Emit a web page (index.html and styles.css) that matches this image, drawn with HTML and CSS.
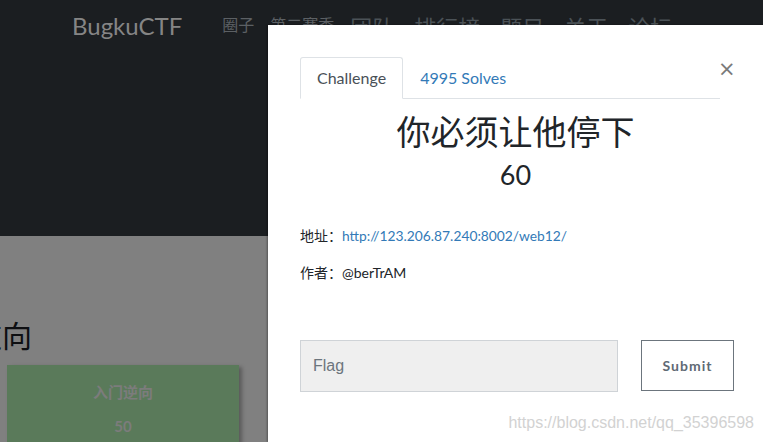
FILE: index.html
```html
<!DOCTYPE html>
<html lang="zh">
<head>
<meta charset="utf-8">
<title>BugkuCTF</title>
<link rel="stylesheet" href="styles.css">
</head>
<body>
<div class="page">
  <header class="hero">
    <nav class="topnav">
      <a class="brand">BugkuCTF</a>
      <ul class="menu">
        <li class="small">圈子</li>
        <li class="small">第二赛季</li>
        <li>团队</li>
        <li>排行榜</li>
        <li>题目</li>
        <li>关于</li>
        <li>论坛</li>
      </ul>
    </nav>
  </header>
  <main class="content">
    <h2 class="category">逆向</h2>
    <div class="card">
      <div class="card-name">入门逆向</div>
      <div class="card-value">50</div>
    </div>
  </main>
</div>

<div class="modal">
  <div class="modal-head">
    <ul class="tabs">
      <li class="tab active">Challenge</li>
      <li class="tab"><a class="tab-link">4995 Solves</a></li>
    </ul>
    <span class="close">&times;</span>
  </div>
  <h3 class="title">你必须让他停下</h3>
  <div class="score">60</div>
  <p class="meta">地址：<a class="link">http://123.206.87.240:8002/web12/</a></p>
  <p class="meta">作者：@berTrAM</p>
  <form class="flag-row">
    <input class="flag-input" type="text" placeholder="Flag">
    <button class="submit" type="button">Submit</button>
  </form>
</div>

<div class="watermark">https://blog.csdn.net/qq_35396598</div>
</body>
</html>
```

FILE: styles.css
```css
html, body {
  margin: 0;
  padding: 0;
}
body {
  width: 763px;
  height: 442px;
  overflow: hidden;
  background: #808080;
  font-family: Lato, "Noto Sans CJK SC", sans-serif;
  position: relative;
}
.page {
  width: 763px;
}
.hero {
  height: 236px;
  background: #1b1e21;
}
.topnav {
  display: flex;
  align-items: flex-start;
  padding-left: 72px;
}
.brand {
  font-family: Lato, sans-serif;
  font-size: 24px;
  line-height: 28px;
  margin-top: 12px;
  color: #858585;
}
.menu {
  list-style: none;
  display: flex;
  margin: 0 0 0 40px;
  padding: 0;
  gap: 20px;
}
.menu li {
  font-family: "Noto Sans CJK SC", sans-serif;
  font-size: 22px;
  line-height: 30px;
  margin-top: 11px;
  color: #4b5257;
}
.menu li.small {
  font-size: 16px;
  line-height: 20px;
  margin-top: 14px;
  color: #5c6064;
  margin-right: -4px;
}
.content {
  padding: 0;
}
.category {
  font-family: "Noto Sans CJK SC", sans-serif;
  font-weight: normal;
  font-size: 30px;
  line-height: 36px;
  margin: 80px 0 0 -28px;
  color: #0e0f12;
}
.card {
  margin: 13px 0 0 7px;
  width: 232px;
  height: 120px;
  background: #5a7a5a;
  box-shadow: 3px 2px 4px rgba(0, 0, 0, 0.3);
  text-align: center;
  color: #7c7c7c;
  font-family: "Noto Sans CJK SC", sans-serif;
  font-weight: 700;
  font-size: 15px;
}
.card-name {
  padding-top: 16px;
  line-height: 22px;
}
.card-value {
  margin-top: 12px;
  line-height: 22px;
  font-family: Lato, sans-serif;
  font-size: 15px;
}
.modal {
  position: absolute;
  left: 268px;
  top: 25px;
  width: 495px;
  height: 417px;
  background: #fff;
  box-shadow: -1px 0 2px rgba(0, 0, 0, 0.35);
  box-sizing: border-box;
  padding: 32px 0 0 32px;
}
.modal-head {
  display: flex;
  align-items: flex-start;
}
.tabs {
  list-style: none;
  margin: 0;
  padding: 0;
  width: 420px;
  display: flex;
  border-bottom: 1px solid #dee2e6;
}
.tab {
  font-size: 16px;
  line-height: 40px;
  padding: 0 16px;
  border: 1px solid transparent;
  border-radius: 3px 3px 0 0;
  margin-bottom: -1px;
  color: #495057;
}
.tab.active {
  border-color: #dee2e6 #dee2e6 #fff;
  background: #fff;
}
.tab-link {
  color: #337ab7;
}
.close {
  font-family: "DejaVu Sans", sans-serif;
  font-size: 21px;
  line-height: 24px;
  color: #7a7a7a;
  margin: 0 0 0 -2px;
  padding: 0;
  width: 14px;
}
.title {
  margin: 12px 32px 0 0;
  text-align: center;
  font-family: "Noto Sans CJK SC", sans-serif;
  font-weight: normal;
  font-size: 34px;
  line-height: 40px;
  color: #212529;
}
.score {
  margin: 7px 32px 0 0;
  text-align: center;
  font-size: 27px;
  line-height: 34px;
  color: #212529;
}
.meta {
  margin: 0 0 17px;
  font-size: 14px;
  line-height: 20px;
  color: #212529;
}
.score + .meta {
  margin-top: 34px;
}
.link {
  color: #337ab7;
  font-size: 13.8px;
}
.flag-row {
  display: flex;
  align-items: flex-start;
  gap: 23px;
  margin-top: 57px;
}
.flag-input {
  box-sizing: border-box;
  width: 318px;
  height: 52px;
  margin: 0;
  padding: 0 12px;
  background: #efefef;
  border: 1px solid #cfd3d7;
  font-family: "Liberation Sans", Arial, sans-serif;
  font-size: 16px;
  color: #495057;
  outline: none;
}
.flag-input::placeholder {
  color: #6c757d;
}
.submit {
  box-sizing: border-box;
  width: 93px;
  height: 51px;
  margin: 0;
  background: #fff;
  border: 1px solid #6c757d;
  font-family: Lato, sans-serif;
  font-weight: bold;
  font-size: 14px;
  letter-spacing: 1px;
  color: #5f6a75;
}
.watermark {
  position: absolute;
  right: 9px;
  top: 413px;
  font-family: "Liberation Sans", Arial, sans-serif;
  font-size: 16px;
  line-height: 20px;
  color: #d2d2d2;
}
```
